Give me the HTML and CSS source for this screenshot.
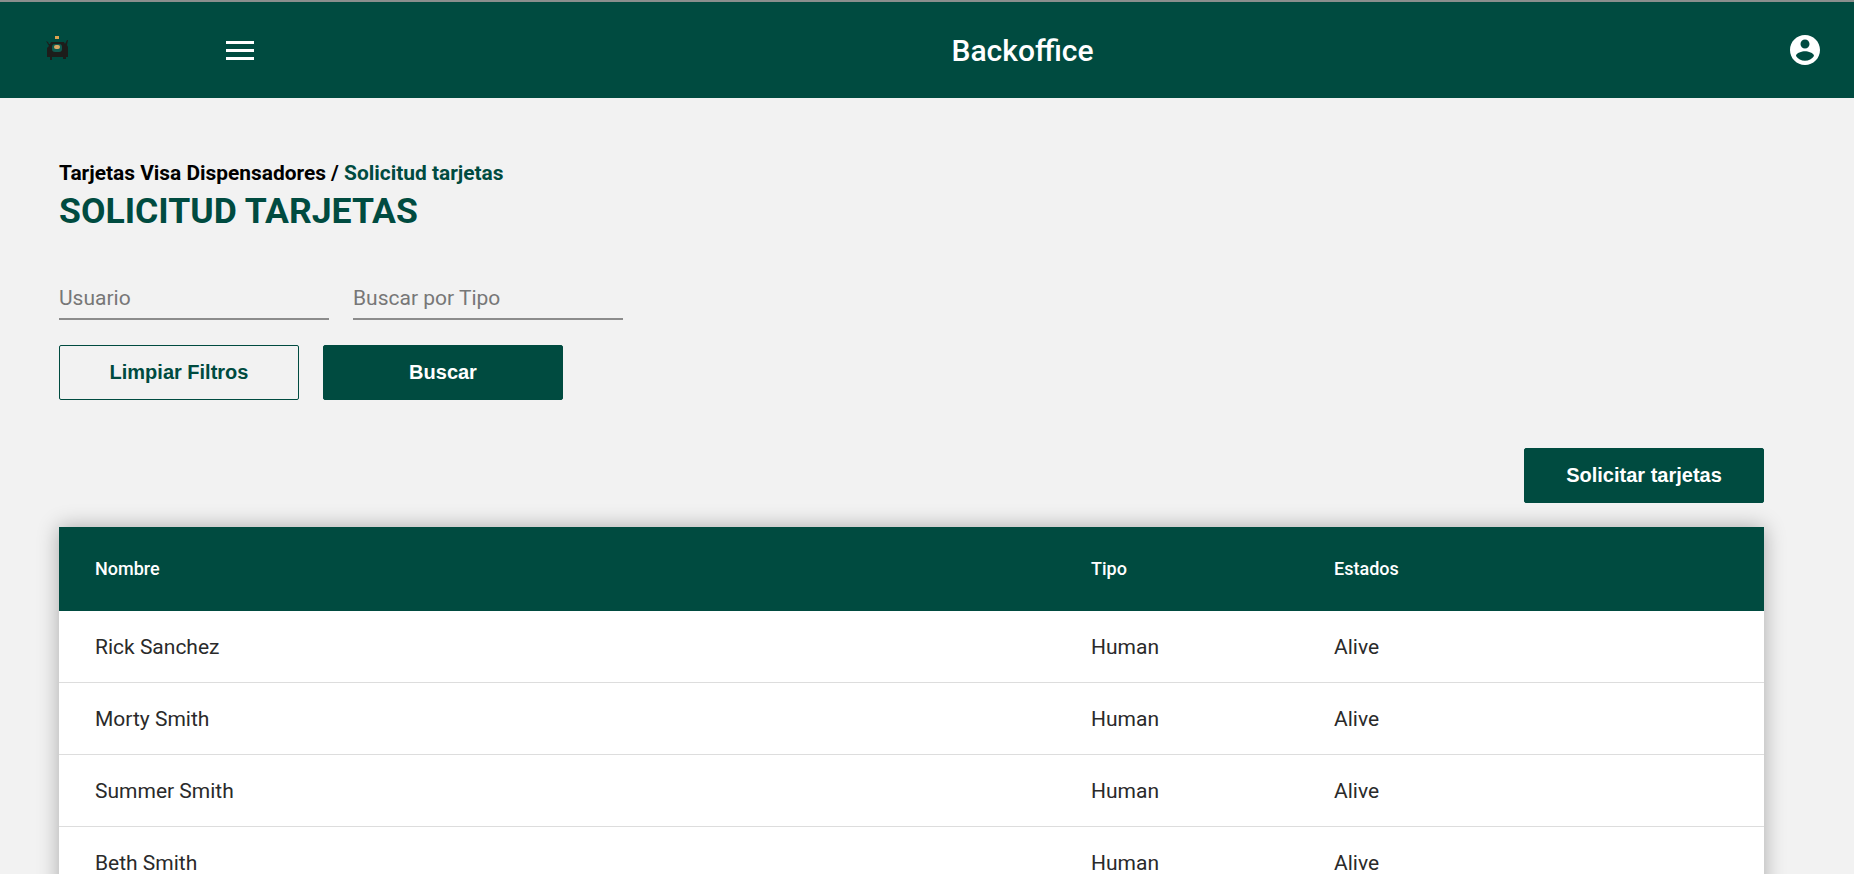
FILE: index.html
```html
<!DOCTYPE html>
<html lang="en">
<head>
    <meta charset="UTF-8">
    <meta name="viewport" content="width=device-width, initial-scale=1.0">
    <title>Backoffice</title>
    <link rel="stylesheet" href="styles.css">
</head>
<body>
    <header class="topbar">
        <div class="topbar-left">
            <svg class="logo" width="24" height="26" viewBox="0 0 24 26">
                <rect x="9" y="0" width="4" height="3" fill="#dca24f"/>
                <path d="M0 5l2 1 1 2h1l1-2h13l1 2 2-4 1 0-1 5 1 2v10h-2v2h-3v-2H6v3H4v-3H1V12l2-2z" fill="#1d1d1b"/>
                <rect x="6" y="8" width="10" height="8" rx="3" fill="#0f5a4f"/>
                <rect x="8" y="9" width="6" height="4" rx="2" fill="#d8a765"/>
            </svg>
            <button class="menu-btn" aria-label="Menu">
                <span></span><span></span><span></span>
            </button>
        </div>
        <div class="topbar-title">Backoffice</div>
        <svg class="user-icon" width="36" height="36" viewBox="0 0 24 24">
            <path fill="#fff" d="M12 2C6.48 2 2 6.48 2 12s4.48 10 10 10 10-4.48 10-10S17.52 2 12 2zm0 3c1.66 0 3 1.34 3 3s-1.34 3-3 3-3-1.34-3-3 1.34-3 3-3zm0 14.2c-2.5 0-4.71-1.28-6-3.22.03-1.99 4-3.08 6-3.08s5.97 1.09 6 3.08c-1.29 1.94-3.5 3.22-6 3.22z"/>
        </svg>
    </header>

    <main class="content">
        <div class="breadcrumb">Tarjetas Visa Dispensadores / <span class="breadcrumb-current">Solicitud tarjetas</span></div>
        <h1 class="page-title">SOLICITUD TARJETAS</h1>

        <div class="filters">
            <input class="filter-input" type="text" placeholder="Usuario">
            <input class="filter-input" type="text" placeholder="Buscar por Tipo">
        </div>

        <div class="filter-actions">
            <button class="btn btn-outline">Limpiar Filtros</button>
            <button class="btn btn-solid">Buscar</button>
        </div>

        <div class="table-actions">
            <button class="btn btn-solid">Solicitar tarjetas</button>
        </div>

        <div class="table-card">
            <table class="data-table">
                <thead>
                    <tr><th>Nombre</th><th>Tipo</th><th>Estados</th></tr>
                </thead>
                <tbody>
                    <tr><td>Rick Sanchez</td><td>Human</td><td>Alive</td></tr>
                    <tr><td>Morty Smith</td><td>Human</td><td>Alive</td></tr>
                    <tr><td>Summer Smith</td><td>Human</td><td>Alive</td></tr>
                    <tr><td>Beth Smith</td><td>Human</td><td>Alive</td></tr>
                    <tr><td>Jerry Smith</td><td>Human</td><td>Alive</td></tr>
                </tbody>
            </table>
        </div>
    </main>
</body>
</html>
```

FILE: styles.css
```css
* {
    box-sizing: border-box;
}

html, body {
    height: 874px;
    overflow: hidden;
}

body {
    margin: 0;
    background-color: #f2f2f2;
    font-family: Roboto, sans-serif;
}

.topbar {
    height: 98px;
    border-top: 2px solid #8a8f8d;
    background-color: #004b40;
    display: flex;
    justify-content: space-between;
    align-items: center;
    padding: 0 31px 0 46px;
    color: #fff;
}

.topbar-left {
    display: flex;
    align-items: center;
    gap: 156px;
    padding-right: 4px;
}

.logo {
    display: block;
    margin-bottom: 2px;
}

.menu-btn {
    display: flex;
    flex-direction: column;
    gap: 5px;
    width: 28px;
    padding: 0;
    border: none;
    background: none;
}

.menu-btn span {
    display: block;
    height: 3px;
    background-color: #fff;
}

.topbar-title {
    font-size: 30px;
    font-weight: 500;
}

.user-icon {
    display: block;
}

.content {
    padding: 63px 90px 0 59px;
}

.breadcrumb {
    font-size: 20.9px;
    line-height: 24px;
    font-weight: 700;
    color: #000;
}

.breadcrumb-current {
    color: #004b40;
}

.page-title {
    margin: 0;
    padding-top: 4px;
    font-size: 35.6px;
    line-height: 44px;
    font-weight: 700;
    color: #004b40;
}

.filters {
    display: flex;
    gap: 24px;
    margin-top: 43px;
}

.filter-input {
    width: 270px;
    height: 44px;
    padding: 1px 0 0;
    border: none;
    border-bottom: 2px solid #8c8c8c;
    background: none;
    font-family: Roboto, sans-serif;
    font-size: 21px;
    font-weight: 400;
}

.filter-input::placeholder {
    color: #777;
    opacity: 1;
}

.filter-actions {
    display: flex;
    gap: 24px;
    margin-top: 25px;
}

.btn {
    width: 240px;
    height: 55px;
    border-radius: 2px;
    font-family: "Liberation Sans", Arial, sans-serif;
    font-size: 20px;
    font-weight: 700;
    cursor: pointer;
}

.btn-solid {
    background-color: #004b40;
    border: 1px solid #004b40;
    color: #fff;
}

.btn-outline {
    background: none;
    border: 1px solid #004b40;
    color: #004b40;
}

.table-actions {
    display: flex;
    justify-content: flex-end;
    margin-top: 48px;
}

.table-card {
    margin-top: 24px;
    background-color: #fff;
    box-shadow: 0 0 20px rgba(0, 0, 0, 0.3);
}

.data-table {
    width: 100%;
    border-collapse: separate;
    border-spacing: 0;
    table-layout: fixed;
}

.data-table th:nth-child(1) {
    width: 996px;
}

.data-table th:nth-child(2) {
    width: 243px;
}

.data-table th {
    height: 84px;
    padding: 0 0 2px 36px;
    background-color: #004b40;
    color: #fff;
    font-size: 18px;
    font-weight: 500;
    text-align: left;
}

.data-table td {
    height: 72px;
    padding: 0 0 0 36px;
    border-bottom: 1px solid #ddd;
    color: #2a2a2a;
    font-size: 21px;
    font-weight: 400;
}
```
